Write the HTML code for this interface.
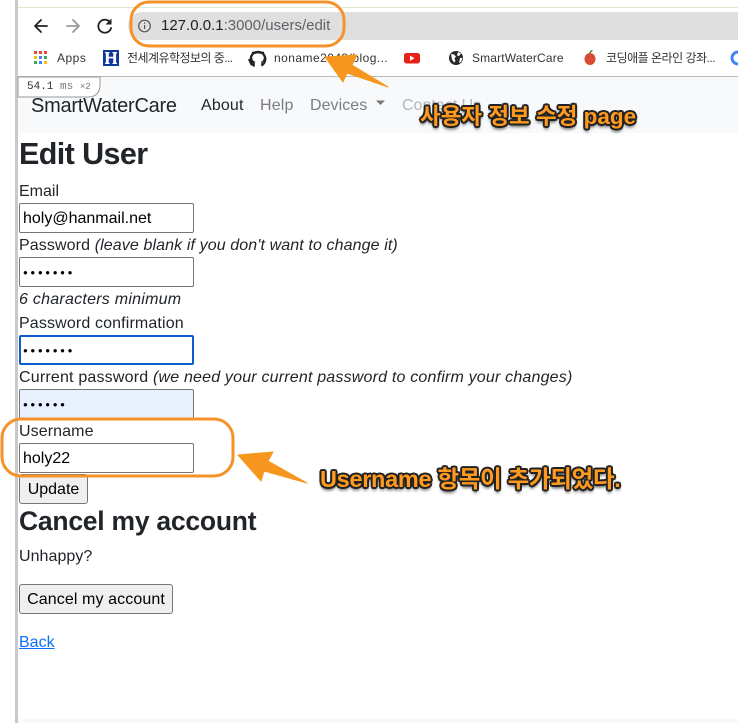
<!DOCTYPE html>
<html lang="ko"><head><meta charset="utf-8"><title>Edit User</title>
<style>
html,body{margin:0;padding:0;width:738px;height:723px;overflow:hidden;background:#fff}
body{position:relative;font-family:"Liberation Sans","Noto Sans CJK KR",sans-serif;color:#212529;font-size:16px}
.a{position:absolute;white-space:nowrap;line-height:20px}
.box{position:absolute;box-sizing:border-box;background:#fff;border:1px solid #767676;border-radius:2px;left:19px;width:175px;height:30px;font-size:16px;line-height:30px;padding-left:3px;color:#000}
.dots{font-size:8px;letter-spacing:2.600px;line-height:29px}
.btn{position:absolute;box-sizing:border-box;background:#efefef;border:1px solid #767676;border-radius:3px;left:19px;height:30px;line-height:30px;text-align:center;color:#000;font-size:16px}
.bm{font-size:12px;color:#333}
.nav{font-size:16px;color:#7b7d80}
.call{font-weight:bold;color:#ff9a1f;text-shadow:-1.500px -1.500px 0 #222,1.500px -1.500px 0 #222,-1.500px 1.500px 0 #222,1.500px 1.500px 0 #222,0 2px 0 #222,0 -2px 0 #222,2px 0 0 #222,-2px 0 0 #222,0 3px 3px #333}
</style></head><body>
<div class="a" style="left:15px;top:0;width:3px;height:723px;background:#c9c9c9"></div>
<div class="a" style="left:18px;top:7px;width:720px;height:1px;background:#dde8d0"></div>
<div class="a" style="left:128px;top:12px;width:610px;height:28px;background:#dfdfdf;border-radius:14px 0 0 14px"></div>
<div class="a" style="left:18px;top:76px;width:720px;height:1px;background:#b9b9b9"></div>
<div class="a" style="left:18px;top:77px;width:720px;height:56px;background:#f8f9fa"></div>
<div class="a" style="left:18px;top:719px;width:720px;height:4px;background:#f8f9fa"></div>

<svg class="a" style="left:0;top:0" width="738" height="723" viewBox="0 0 738 723">
<g fill="none" stroke-linecap="round" stroke-linejoin="round">
<path d="M47 26H35M41 20l-6 6 6 6" stroke="#222" stroke-width="1.800"/>
<path d="M67 26h12M73 20l6 6-6 6" stroke="#9a9a9a" stroke-width="1.800"/>
<path d="M110.500 23a6.500 6.500 0 1 0 .6 5" stroke="#222" stroke-width="1.800"/>
<circle cx="144.500" cy="26" r="5.800" stroke="#555" stroke-width="1.200"/>
</g>
<path d="M111.500 18.500v6h-6z" fill="#222"/>
<rect x="144" y="25" width="1.200" height="4" fill="#555"/><rect x="144" y="22.500" width="1.200" height="1.300" fill="#555"/>
<rect x="34" y="51" width="3" height="3" fill="#e8453c"/><rect x="39" y="51" width="3" height="3" fill="#e8453c"/><rect x="44" y="51" width="3" height="3" fill="#e8453c"/>
<rect x="34" y="56" width="3" height="3" fill="#fbbc05"/><rect x="39" y="56" width="3" height="3" fill="#4285f4"/><rect x="44" y="56" width="3" height="3" fill="#34a853"/>
<rect x="34" y="61" width="3" height="3" fill="#34a853"/><rect x="39" y="61" width="3" height="3" fill="#4285f4"/><rect x="44" y="61" width="3" height="3" fill="#fbbc05"/>
<rect x="103" y="50" width="16" height="16" fill="#10389a"/>
<path d="M105 52h4.500v1.200h-.8v3.600h4.600v-3.600h-.8V52H117v1.200h-.9v9.600h.9V64h-4.500v-1.200h.8v-4.400h-4.600v4.400h.8V64H105v-1.200h.9v-9.600H105z" fill="#fff"/>
<path d="M254.500 65.500A7.300 7.300 0 1 1 261.500 65.500" fill="none" stroke="#222" stroke-width="2.200"/>
<path d="M254 66v-3.500c-1.500 0-2.300-.8-2.600-2l-2.400-.5 2 4.500 3 1.500zM262 66v-4c1.500-.8 2.500-2.200 2.500-4.500 0-1.100-.4-2.100-1-2.800.2-.8.1-1.700-.2-2.400-.9 0-1.700.4-2.500.9a7.500 7.500 0 0 0-5.600 0c-.8-.5-1.600-.9-2.500-.9-.3.7-.4 1.600-.2 2.400-.6.7-1 1.700-1 2.800 0 2.300 1 3.700 2.500 4.500l-1 .4" fill="none" stroke="#222" stroke-width="1.400"/>
<rect x="404" y="53" width="16" height="10.500" rx="2.500" fill="#e62117"/><path d="M410 55.500l4.500 2.700-4.500 2.700z" fill="#fff"/>
<circle cx="456" cy="58" r="7" fill="#2a2a2a"/>
<path d="M451 54l3 .5 2 2-1.500 2 1 2.500-1.500 1.500-2-3zM458 52l3 1.500-2 2.500-2-.5zM460 58l2.500 0-1.500 4-2 1z" fill="#fff"/>
<ellipse cx="590" cy="59" rx="5.500" ry="6" fill="#d94a32"/>
<path d="M590 53q.5-2 2.500-2.500" stroke="#4a8c2a" stroke-width="1.500" fill="none"/>
<circle cx="738" cy="58" r="6" fill="none" stroke="#4285f4" stroke-width="3"/>
<path d="M18 77H100V84Q100 97 88 97H18Z" fill="#fff" stroke="#999" stroke-width="1"/>
<path d="M376 101.500l4.500 4.500 4.500-4.500z" fill="#777" transform="translate(0 -1)"/>
</svg>

<div class="a" style="left:161px;top:16px;font-size:15px"><span style="color:#222">127.0.0.1</span><span style="color:#5f6368">:3000/users/edit</span></div>
<div class="a bm" style="left:57px;top:48px;letter-spacing:.5px">Apps</div>
<div class="a bm" style="left:127px;top:48px;letter-spacing:-.55px">전세계유학정보의 중...</div>
<div class="a bm" style="left:274px;top:48px;letter-spacing:.45px">noname2048/blog...</div>
<div class="a bm" style="left:472px;top:48px;letter-spacing:.15px">SmartWaterCare</div>
<div class="a bm" style="left:606px;top:48px;letter-spacing:-.5px">코딩애플 온라인 강좌...</div>
<div class="a" style="left:27px;top:77px;font:11px/20px 'Liberation Mono',monospace;color:#333">54.1 <span style="color:#777">ms</span> <span style="color:#777;font-size:9px">×2</span></div>

<div class="a" style="left:31px;top:96px;font-size:20px;color:#212529;letter-spacing:-.25px">SmartWaterCare</div>
<div class="a nav" style="left:201px;top:96px;color:#212529;letter-spacing:.15px">About</div>
<div class="a nav" style="left:260px;top:96px;letter-spacing:.15px">Help</div>
<div class="a nav" style="left:310px;top:96px;letter-spacing:.05px">Devices</div>
<div class="a nav" style="left:402px;top:96px;color:#b5b6b8">Contact Us</div>

<div class="a" style="left:19px;top:134px;font-size:30.500px;line-height:40px;font-weight:bold;letter-spacing:-.6px">Edit User</div>
<div class="a" style="left:19px;top:182px">Email</div>
<div class="box" style="top:203px">holy@hanmail.net</div>
<div class="a" style="left:19px;top:236px;letter-spacing:.11px">Password <i>(leave blank if you don't want to change it)</i></div>
<div class="box dots" style="top:257px">●●●●●●●</div>
<div class="a" style="left:19px;top:290px;letter-spacing:.25px"><i>6 characters minimum</i></div>
<div class="a" style="left:19px;top:314px;letter-spacing:.14px">Password confirmation</div>
<div class="box dots" style="top:335px;border:2px solid #0b5ccf;padding-left:2px;line-height:27px">●●●●●●●</div>
<div class="a" style="left:19px;top:368px;letter-spacing:.19px">Current password <i>(we need your current password to confirm your changes)</i></div>
<div class="box dots" style="top:389px;background:#e8f0fe">●●●●●●</div>
<div class="a" style="left:19px;top:422px;letter-spacing:.1px">Username</div>
<div class="box" style="top:443px">holy22</div>
<div class="btn" style="top:474px;width:69px">Update</div>
<div class="a" style="left:19px;top:505px;font-size:26.500px;line-height:32px;font-weight:bold;letter-spacing:-.25px">Cancel my account</div>
<div class="a" style="left:19px;top:547px;letter-spacing:.05px">Unhappy?</div>
<div class="btn" style="top:584px;width:154px;letter-spacing:.1px">Cancel my account</div>
<div class="a" style="left:19px;top:633px;color:#0d6efd;text-decoration:underline">Back</div>

<svg class="a" style="left:0;top:0" width="738" height="723" viewBox="0 0 738 723">
<rect x="131" y="2" width="213" height="44" rx="18" fill="none" stroke="#f5922a" stroke-width="3"/>
<rect x="2" y="419" width="231" height="57" rx="19" fill="none" stroke="#f5922a" stroke-width="3"/>
<path d="M325 57L357 55 352 65 388 87 347 73 343 82Z" fill="#f7961e" stroke="#f7961e" stroke-linejoin="round"/>
<path d="M238 455L273 452 268 461 307 483 264 471 261 481Z" fill="#f7961e" stroke="#f7961e" stroke-linejoin="round"/>
</svg>
<div class="a call" style="left:420px;top:107px;font-size:22.500px">사용자 정보 수정 page</div>
<div class="a call" style="left:320px;top:469px;font-size:23.500px;letter-spacing:-.3px">Username 항목이 추가되었다.</div>
</body></html>
